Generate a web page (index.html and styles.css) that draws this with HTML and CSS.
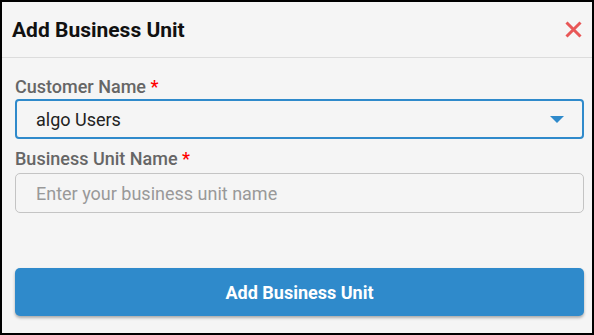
FILE: index.html
```html
<!DOCTYPE html>
<html>
<head>
<meta charset="utf-8">
<link rel="stylesheet" href="styles.css">
</head>
<body>
<div class="modal">
  <div class="header">
    <h1 class="title">Add Business Unit</h1>
    <button class="close" aria-label="Close">
      <svg width="17" height="17" viewBox="0 0 17 17"><path d="M1.5 1.5 L15.5 15.5 M15.5 1.5 L1.5 15.5" stroke="#e85757" stroke-width="3" stroke-linecap="butt"/></svg>
    </button>
  </div>
  <div class="body">
    <label class="label">Customer Name <span class="req">*</span></label>
    <div class="select">
      <span class="value">algo Users</span>
      <svg class="caret" width="14" height="7" viewBox="0 0 14 7"><path d="M0 0 H14 L7 7 Z" fill="#2f8acb"/></svg>
    </div>
    <label class="label label2">Business Unit Name <span class="req">*</span></label>
    <div class="input"><span class="placeholder">Enter your business unit name</span></div>
    <button class="submit">Add Business Unit</button>
  </div>
</div>
</body>
</html>
```
FILE: styles.css
```css
* { box-sizing: border-box; }
html, body { margin: 0; padding: 0; }
body { width: 594px; height: 335px; font-family: Roboto, "Liberation Sans", sans-serif; background: #000; }
.modal {
  width: 594px; height: 335px;
  border: 2px solid #000;
  background: #f5f5f5;
  display: flex; flex-direction: column;
}
.header {
  height: 56px; flex-shrink: 0;
  border-bottom: 1px solid #dcdcdc;
  display: flex; align-items: center; justify-content: space-between;
  padding: 0 10px 0 10px;
}
.title { margin: 0; font-size: 21px; font-weight: 700; color: #111; }
.close { background: none; border: 0; padding: 0; width: 17px; height: 17px; display: flex; }
.body { padding: 0 8px 0 13px; display: flex; flex-direction: column; }
.label { flex-shrink: 0; font-size: 18px; font-weight: 500; color: #666; margin-top: 17px; line-height: 24px; height: 24px; }
.label2 { margin-top: 8px; margin-bottom: 2px; }
.req { color: #f00; }
.select {
  flex-shrink: 0;
  height: 40px; border: 2px solid #2f8acb; border-radius: 4px;
  display: flex; align-items: center; justify-content: space-between;
  padding: 0 18px 0 19px;
}
.value { font-size: 18px; color: #222; }
.input {
  flex-shrink: 0;
  height: 40px; border: 1px solid #c4c4c4; border-radius: 5px;
  display: flex; align-items: center; padding: 0 20px;
}
.placeholder { font-size: 18px; color: #999; }
.submit {
  flex-shrink: 0;
  margin-top: 55px; height: 48px; border: 0; border-radius: 5px;
  background: #2f8acb; color: #fff; font-family: inherit; font-size: 18px; font-weight: 700;
  box-shadow: 0 2px 3px rgba(0,0,0,0.3);
}
```
